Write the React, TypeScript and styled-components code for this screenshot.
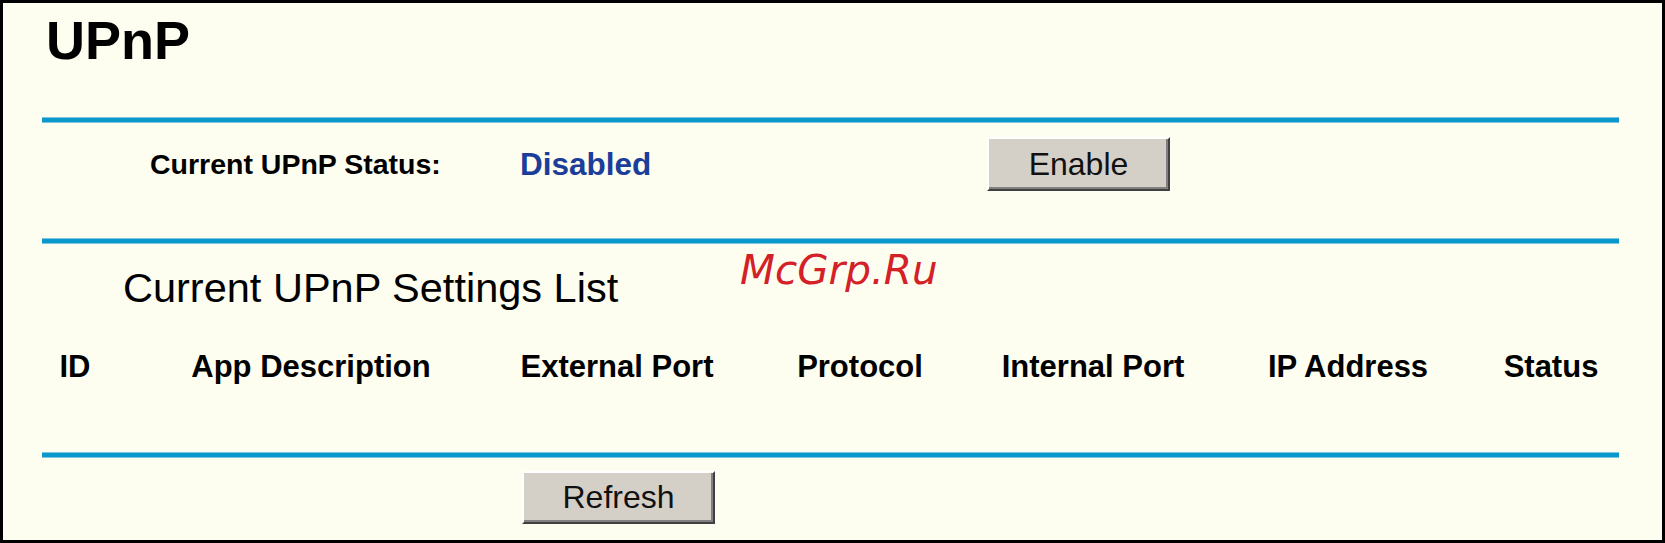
import React from "react";
import styled, { createGlobalStyle } from "styled-components";

const Global = createGlobalStyle`
  html, body { margin: 0; padding: 0; background: #000; }
  * { box-sizing: border-box; }
`;

const Frame = styled.div`
  position: relative;
  width: 1665px;
  height: 543px;
  border: 3px solid #000;
  background: #fdfdf0;
  padding: 7px 43px 0 39px;
  font-family: "Liberation Sans", Arial, sans-serif;
  color: #000;
  overflow: hidden;
`;

const Title = styled.h1`
  margin: 0 0 0 4px;
  height: 60px;
  font-size: 54px;
  line-height: 60px;
  font-weight: 700;
`;

const Rule = styled.div<{ $top: number }>`
  margin-top: ${(p) => p.$top}px;
  height: 4px;
  background: #0a98cc;
  box-shadow: 0 -1px 0 #7cc6e2, 0 1px 0 #7cc6e2;
`;

const StatusRow = styled.div`
  margin-top: 15px;
  height: 54px;
  padding-left: 108px;
  display: grid;
  grid-template-columns: 370px 467px 183px;
  align-items: center;
`;

const Label = styled.span`
  font-size: 28.5px;
  line-height: 30px;
  font-weight: 700;
  white-space: nowrap;
`;

const StatusValue = styled.span`
  font-size: 31.5px;
  line-height: 32px;
  font-weight: 700;
  color: #1b3e9a;
`;

const Button = styled.button<{ $w: number; $h: number }>`
  width: ${(p) => p.$w}px;
  height: ${(p) => p.$h}px;
  padding: 0;
  margin: 0;
  display: flex;
  align-items: center;
  justify-content: center;
  background: #d4d0c8;
  border: 2px solid;
  border-color: #ffffff #404040 #404040 #ffffff;
  box-shadow: inset -2px -2px 0 #808080;
  font-family: "Liberation Sans", Arial, sans-serif;
  font-size: 32px;
  color: #111;
  cursor: pointer;
`;

const SectionTitle = styled.h2`
  margin: 22px 0 0 0;
  padding-left: 81px;
  font-size: 41.5px;
  line-height: 46px;
  font-weight: 400;
  white-space: nowrap;
`;

const HeaderRow = styled.div`
  margin-top: 38px;
  display: grid;
  grid-template-columns: 66px 406px 206px 280px 186px 324px 82px;
`;

const HeaderCell = styled.div`
  font-size: 31px;
  line-height: 36px;
  font-weight: 700;
  text-align: center;
  white-space: nowrap;
  display: flex;
  justify-content: center;
`;

const Footer = styled.div`
  margin-top: 14px;
  padding-left: 480px;
`;

const Watermark = styled.div`
  position: absolute;
  left: 737px;
  top: 247px;
  font-family: "DejaVu Sans", sans-serif;
  font-style: oblique;
  font-size: 40.5px;
  line-height: 40px;
  color: #d42027;
  pointer-events: none;
  white-space: nowrap;
`;

const columns = [
  "ID",
  "App Description",
  "External Port",
  "Protocol",
  "Internal Port",
  "IP Address",
  "Status",
];

export default function App() {
  return (
    <>
      <Global />
      <Frame>
        <Title>UPnP</Title>
        <Rule $top={48} />
        <StatusRow>
          <Label>Current UPnP Status:</Label>
          <StatusValue>Disabled</StatusValue>
          <Button $w={183} $h={54}>Enable</Button>
        </StatusRow>
        <Rule $top={48} />
        <SectionTitle>Current UPnP Settings List</SectionTitle>
        <HeaderRow>
          {columns.map((c) => (
            <HeaderCell key={c}>{c}</HeaderCell>
          ))}
        </HeaderRow>
        <Rule $top={68} />
        <Footer>
          <Button $w={193} $h={53}>Refresh</Button>
        </Footer>
        <Watermark>McGrp.Ru</Watermark>
      </Frame>
    </>
  );
}
